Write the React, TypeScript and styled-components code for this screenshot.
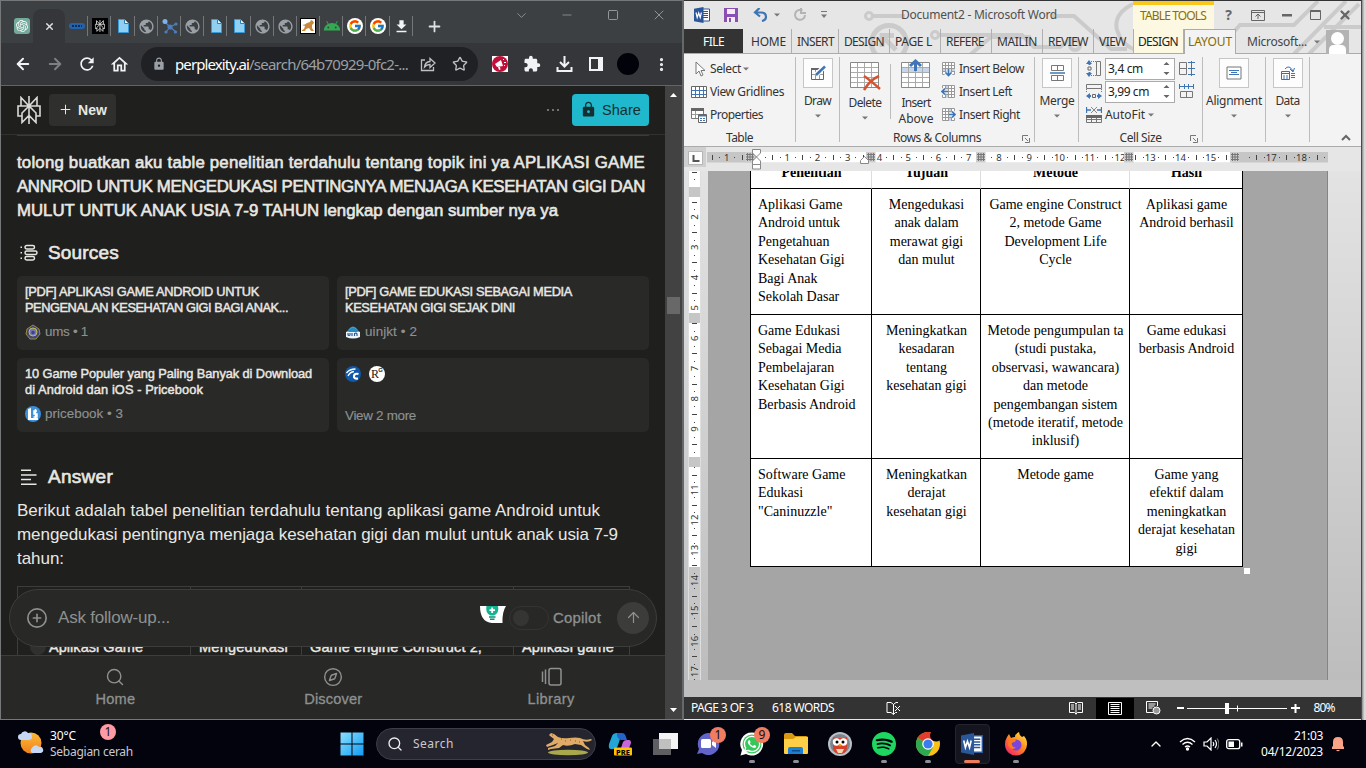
import React, { useLayoutEffect, useRef, useState } from "react";
import styled, { createGlobalStyle, css } from "styled-components";
import {
  ArrowLeft, ArrowRight, ArrowUp, ChevronDown, ChevronUp, CirclePlus, Compass, Minus, MoreVertical,
  Plus, Search, Square, Star, X,
} from "lucide-react";
import { FcGoogle } from "react-icons/fc";
import { SiOpenai, SiSpotify } from "react-icons/si";
import { MdAndroid, MdDownload, MdExtension, MdLock, MdPublic, MdRefresh, MdOutlineHome } from "react-icons/md";
import { FaWhatsapp } from "react-icons/fa";

const ui = `"Noto Sans", "Open Sans", sans-serif`;
const grotesk = `"Liberation Sans", Inter, sans-serif`;

const Global = createGlobalStyle`
  * { box-sizing: border-box; }
  body { margin: 0; overflow: hidden; background: #03030d; }
  svg { display: block; flex: none; }
`;

/* Text whose tracking is adjusted so that it spans a given width */
const FitSpan = styled.span`
  display: inline-block;
  white-space: pre;
  flex: none;
`;
function Fit({ w, children }: { w: number; children: string }) {
  const ref = useRef<HTMLSpanElement>(null);
  const [gap, setGap] = useState(0);
  useLayoutEffect(() => {
    const el = ref.current;
    if (el) setGap((w - el.getBoundingClientRect().width) / children.length);
  }, []);
  return <FitSpan ref={ref} style={{ letterSpacing: gap }}>{children}</FitSpan>;
}

const medium = css`
  font-weight: 400;
  -webkit-text-stroke: 0.6px currentColor;
`;

const Desktop = styled.div`
  width: 1366px;
  height: 768px;
  display: flex;
  flex-direction: column;
  overflow: hidden;
`;
const Windows = styled.div`
  height: 720px;
  display: flex;
`;

/* ---------- Browser ---------- */
const Browser = styled.section`
  width: 684px;
  height: 720px;
  border: 1px solid #757778;
  border-right: 2px solid #66696b;
  display: flex;
  flex-direction: column;
  background: #1f1f1e;
`;
const TabStrip = styled.div`
  height: 42px;
  background: #3c4043;
  display: flex;
  align-items: flex-end;
`;
const TabCell = styled.div`
  width: 23.2px;
  height: 34px;
  display: flex;
  align-items: center;
  justify-content: center;
  position: relative;
  &::after {
    content: "";
    position: absolute;
    right: 0;
    top: 7px;
    width: 1px;
    height: 20px;
    background: #73777a;
  }
`;
const FirstTab = styled.div`
  width: 32px;
  height: 34px;
  display: flex;
  align-items: center;
  justify-content: center;
  padding-left: 10px;
`;
const GptIcon = styled.div`
  width: 16px;
  height: 16px;
  border-radius: 3px;
  background: #74aa9c;
  color: #fff;
  display: grid;
  place-items: center;
`;
const ActiveTab = styled.div`
  width: 32px;
  height: 34px;
  border-radius: 8px 8px 0 0;
  background: #35363a;
  color: #dfe1e5;
  display: grid;
  place-items: center;
`;
const NewTab = styled.div`
  width: 44px;
  height: 34px;
  color: #dfe1e5;
  display: grid;
  place-items: center;
`;
const Caption = styled.div`
  display: flex;
  margin-left: auto;
  align-self: flex-start;
  color: #9da0a3;
  & > span { width: 46px; height: 28px; display: grid; place-items: center; }
`;
const Toolbar = styled.div`
  height: 43px;
  background: #35363a;
  border-bottom: 1px solid #626466;
  display: flex;
  align-items: center;
  padding-left: 6px;
`;
const ToolButton = styled.div<{ $w?: number; $dim?: boolean }>`
  width: ${(p) => p.$w ?? 32}px;
  height: 32px;
  flex: none;
  color: ${(p) => (p.$dim ? "#7d7f82" : "#f1f3f4")};
  display: grid;
  place-items: center;
`;
const Omnibox = styled.div`
  width: 337px;
  height: 34px;
  margin: 0 6px;
  border-radius: 17px;
  background: #202124;
  color: #9aa0a6;
  display: flex;
  align-items: center;
  padding: 0 2px 0 11px;
  font: 15px/20px ${ui};
  b { font-weight: 400; color: #fff; }
`;
const UrlText = styled.span`
  display: flex;
  flex: none;
  margin: 0 0 1px 9px;
  width: 237px;
`;
const Avatar = styled.div`
  width: 22px;
  height: 22px;
  border-radius: 50%;
  background: #02020a;
`;
const Viewport = styled.div`
  flex: 1;
  min-height: 0;
  display: flex;
`;
const Page = styled.main`
  width: 664px;
  height: 100%;
  position: relative;
  overflow: hidden;
  color: #e8e8e3;
  font-family: ${grotesk};
`;
const Scrollbar = styled.div`
  width: 17px;
  background: #424242;
  display: flex;
  flex-direction: column;
  align-items: center;
  padding: 7px 0;
`;
const Thumb = styled.div`
  width: 13px;
  height: 17px;
  margin: 200px 0 auto;
  background: #686868;
`;
const PageHeader = styled.header`
  height: 49px;
  border-bottom: 1px solid #31312f;
  display: flex;
  align-items: center;
  padding: 0 16px 1px;
`;
const NewButton = styled.div`
  width: 67px;
  height: 32px;
  margin-left: 8px;
  border-radius: 4px;
  background: #2f2f2d;
  display: flex;
  align-items: center;
  justify-content: center;
  gap: 5px;
  font-size: 14px;
  font-weight: 700;
`;
const Dots = styled.div`
  display: flex;
  gap: 3px;
  margin: 0 13px 0 auto;
  i { width: 2px; height: 2px; background: #8d918f; border-radius: 1px; }
`;
const ShareButton = styled.div`
  width: 77px;
  height: 32px;
  border-radius: 4px;
  background: #20b8cd;
  color: #15302f;
  display: flex;
  align-items: center;
  justify-content: center;
  gap: 5px;
  font-size: 14.5px;
`;
const Content = styled.div`
  padding: 0 16px;
`;
const Rule = styled.div`
  height: 1px;
  background: #3b3b39;
  width: 632px;
`;
const Query = styled.h1`
  margin: 15px 0 0;
  font-size: 16.8px;
  ${medium}
  line-height: 24px;
  display: flex;
  flex-direction: column;
  align-items: flex-start;
`;
const Heading = styled.h2<{ $top: number }>`
  margin: ${(p) => p.$top}px 0 0;
  height: 28px;
  display: flex;
  align-items: center;
  gap: 10px;
  padding-left: 3px;
  font-size: 19px;
  ${medium}
`;
const Cards = styled.div`
  margin-top: 9px;
  display: grid;
  grid-template-columns: 312px 312px;
  grid-auto-rows: 74px;
  gap: 8px;
`;
const Card = styled.article`
  border-radius: 5px;
  background: #292928;
  padding: 8px;
  display: flex;
  flex-direction: column;
  align-items: flex-start;
  font-size: 12.8px;
  ${medium}
  -webkit-text-stroke-width: 0.45px;
  line-height: 16px;
`;
const CardMeta = styled.div<{ $drop?: boolean }>`
  margin-top: auto;
  margin-bottom: ${(p) => (p.$drop ? -2 : 0)}px;
  height: 20px;
  display: flex;
  align-items: center;
  gap: 4px;
  color: #8d918f;
  font-size: 13.4px;
  -webkit-text-stroke: 0.15px currentColor;
`;
const Logos = styled.div`
  display: flex;
  gap: 8px;
  -webkit-text-stroke: 0;
`;
const Answer = styled.p`
  margin: 8px 0 0;
  font-size: 17px;
  line-height: 24px;
  display: flex;
  flex-direction: column;
  align-items: flex-start;
`;
const ResultTable = styled.div`
  margin-top: 15px;
  width: 613px;
  height: 120px;
  border: 1px solid #3d3d3b;
  background: #20201f;
  display: grid;
  grid-template-columns: 173px 111px 212px 1fr;
`;
const ResultCell = styled.div<{ $first?: boolean }>`
  padding: ${(p) => (p.$first ? "50px 0 0 12px" : "50px 0 0 8px")};
  border-right: 1px solid #3d3d3b;
  font-size: 14.5px;
  ${medium}
  -webkit-text-stroke-width: 0.4px;
  line-height: 20px;
  display: flex;
  gap: 3px;
  &:last-child { border-right: 0; }
`;
const Bullet = styled.span`
  width: 16px;
  height: 16px;
  margin-top: 2px;
  border-radius: 50%;
  background: #30302f;
`;
const FollowUp = styled.div`
  position: absolute;
  left: 8px;
  top: 503px;
  width: 648px;
  height: 58px;
  border: 1px solid #3d3d3b;
  border-radius: 29px;
  background: #282827;
  display: flex;
  align-items: center;
  padding: 0 7px 1px 16px;
  color: #8d918f;
  font-size: 17px;
`;
const Placeholder = styled.span`
  margin-left: 10px;
  flex: 1;
`;
const Toggle = styled.div`
  width: 40px;
  height: 24px;
  margin: 0 4px 0 3px;
  border: 1px solid #343433;
  border-radius: 12px;
  padding: 3px;
  &::before { content: ""; display: block; width: 16px; height: 16px; border-radius: 50%; background: #353534; }
`;
const CopilotLabel = styled.span`
  font-size: 15px;
  -webkit-text-stroke: 0.3px currentColor;
`;
const Send = styled.div`
  width: 32px;
  height: 32px;
  margin-left: 16px;
  border-radius: 50%;
  background: #3c3c3a;
  display: grid;
  place-items: center;
`;
const BottomNav = styled.nav`
  position: absolute;
  left: 0;
  right: 0;
  bottom: 0;
  height: 64px;
  border-top: 1px solid #3d3d3b;
  background: #282827;
  display: flex;
  padding: 11px 5px 0 5.5px;
  color: #8d918f;
  font-size: 14.6px;
  -webkit-text-stroke: 0.3px currentColor;
`;
const NavItem = styled.div`
  flex: 1;
  display: flex;
  flex-direction: column;
  align-items: center;
  gap: 4px;
  line-height: 17px;
`;

/* ---------- Word ---------- */
const Word = styled.section`
  width: 678px;
  height: 720px;
  border-top: 1px solid #333;
  border-right: 1px solid #4a4a4a;
  display: flex;
  flex-direction: column;
  background: #e6e6e6;
  font: 12px/16px ${ui};
  color: #333;
`;
const Top = styled.div`
  height: 53px;
  position: relative;
  border-bottom: 1px solid #ababab;
`;
const Circuit = styled.svg`
  position: absolute;
  inset: 0;
`;
const TitleRow = styled.div`
  height: 28px;
  position: relative;
  display: flex;
  color: #505050;
`;
const QuickAccess = styled.div`
  width: 217px;
  display: flex;
  align-items: center;
  padding-left: 10px;
`;
const DocTitle = styled.div`
  width: 232px;
  padding-top: 6px;
`;
const TableTools = styled.div`
  width: 81px;
  border-top: 4px solid #f8c81c;
  background: #fdf8e1;
  color: #8d6e00;
  padding: 3px 0 0 7px;
`;
const WinButtons = styled.div`
  display: flex;
  color: #666;
  & > span { width: 29px; height: 28px; display: grid; place-items: center; }
  b { font-size: 14px; }
`;
const TabRow = styled.div`
  height: 25px;
  position: relative;
  display: flex;
  line-height: 25px;
`;
const FileTab = styled.div`
  width: 59px;
  height: 24px;
  background: #333;
  color: #fff;
  text-align: center;
`;
const RibbonTab = styled.div<{ $w: number; $kind?: "tool" | "active"; $pad?: number }>`
  width: ${(p) => p.$w}px;
  height: 24px;
  padding-left: ${(p) => p.$pad ?? 5}px;
  border-right: 1px solid #b0b0b0;
  ${(p) => p.$kind === "tool" && css`background: #fdf8e1; color: #222;`}
  ${(p) => p.$kind === "active" && css`
    height: 25px;
    background: #f3f3f3;
    border: 1px solid #ababab;
    border-bottom: 0;
    line-height: 23px;
    color: #856a00;
  `}
`;
const Account = styled.div`
  display: flex;
  align-items: center;
  margin-left: 11px;
  color: #444;
`;
const Portrait = styled.div`
  width: 23px;
  height: 24px;
  margin-left: 6px;
  background: #b3b3b3;
`;
const Ribbon = styled.div`
  height: 93px;
  background: #f3f3f3;
  border-bottom: 1px solid #ababab;
  display: flex;
  padding-top: 3px;
`;
const Group = styled.div<{ $w: number }>`
  width: ${(p) => p.$w}px;
  height: 85px;
  border-right: 1px solid #bcbcbc;
  display: flex;
  flex-direction: column;
`;
const GroupBody = styled.div`
  height: 73px;
  flex: none;
  display: flex;
`;
const GroupLabel = styled.div`
  height: 16px;
  display: flex;
  align-items: center;
  justify-content: center;
  position: relative;
  & > svg { position: absolute; right: 4px; top: 5px; }
`;
const Commands = styled.div<{ $pad?: number }>`
  display: flex;
  flex-direction: column;
  padding-left: ${(p) => p.$pad ?? 0}px;
`;
const Command = styled.div<{ $gap?: number }>`
  height: 23px;
  flex: none;
  display: flex;
  align-items: center;
  gap: ${(p) => p.$gap ?? 3}px;
`;
const BigButton = styled.div<{ $w: number; $top?: number }>`
  width: ${(p) => p.$w}px;
  flex: none;
  padding-top: ${(p) => p.$top ?? 0}px;
  display: flex;
  flex-direction: column;
  align-items: center;
`;
const Tile = styled.div`
  width: 30px;
  height: 30px;
  margin: 1px 0 5px;
  border: 1px solid #c6c6c6;
  background: #fdfdfd;
  display: grid;
  place-items: center;
`;
const InnerRule = styled.div`
  width: 1px;
  height: 55px;
  margin-top: 7px;
  background: #bcbcbc;
`;
const SizeInput = styled.div`
  width: 70px;
  height: 22px;
  border: 1px solid #ababab;
  background: #fff;
  color: #222;
  display: flex;
  align-items: center;
  justify-content: space-between;
  padding: 0 4px 0 2px;
`;
const RulerRow = styled.div`
  height: 24px;
  display: flex;
`;
const Workspace = styled.div`
  height: 509px;
  display: flex;
  background: linear-gradient(#e3e3e3, #bdbdbd);
`;
const PageArea = styled.div`
  width: 620px;
  height: 509px;
  margin-left: 7px;
  border-right: 1px solid #858585;
  background: #a5a5a5;
  padding-left: 42px;
  overflow: hidden;
`;
const DocTable = styled.div`
  width: 493px;
  display: grid;
  grid-template-columns: 121px 109px 149px 112px;
  grid-template-rows: 18px 126px 144px 107px;
  background: #fff;
  border: 1px solid #000;
  border-top: 0;
  font: 14px/18.4px "Liberation Serif", serif;
  color: #000;
`;
const DocCell = styled.div<{ $left?: boolean; $head?: boolean }>`
  border-right: 1px solid #000;
  border-bottom: 1px solid #000;
  padding: 7px 0 0 ${(p) => (p.$left ? 7 : 1)}px;
  text-align: ${(p) => (p.$left ? "left" : "center")};
  white-space: pre;
  &:nth-child(4n) { border-right: 0; }
  &:nth-child(n + 13) { border-bottom: 0; }
  ${(p) => p.$head && css`
    border-right-color: #ddd;
    font-weight: 700;
    padding-top: 0;
    & > span { display: block; margin-top: -7px; }
  `}
`;
const EndMark = styled.div`
  width: 6px;
  height: 6px;
  margin: 1px 0 0 494px;
  background: #fff;
`;
const WordGap = styled.div`
  height: 17px;
  background: #bfbfbf;
`;
const StatusBar = styled.footer`
  height: 22px;
  background: #333;
  color: #fff;
  display: flex;
  align-items: center;
  padding-left: 7px;
`;
const ViewButton = styled.span<{ $on?: boolean }>`
  width: 38.5px;
  height: 21px;
  background: ${(p) => (p.$on ? "#000" : "transparent")};
  display: grid;
  place-items: center;
`;
const Behind = styled.div`
  width: 4px;
  height: 720px;
  background: linear-gradient(90deg, #8a8a8a, #d8d8d8 60%);
`;

/* ---------- Taskbar ---------- */
const Taskbar = styled.div`
  height: 48px;
  background: #03030d;
  color: #fff;
  display: flex;
  align-items: center;
  font: 12px/16px ${ui};
`;
const Weather = styled.div`
  width: 334px;
  height: 48px;
  padding-left: 17px;
  display: flex;
  align-items: center;
  gap: 5px;
`;
const Stack = styled.div<{ $end?: boolean }>`
  display: flex;
  flex-direction: column;
  align-items: ${(p) => (p.$end ? "flex-end" : "flex-start")};
`;
const Place = styled.span`
  color: #c9c9ce;
`;
const Pill = styled.div`
  width: 220px;
  height: 32px;
  margin-left: 7px;
  border: 1px solid #3e3e48;
  border-radius: 16px;
  background: #25252f;
  color: #c9c9ce;
  display: flex;
  align-items: center;
  padding: 0 3px 0 10px;
  gap: 10px;
  & > svg:last-child { margin-left: auto; }
`;
const AppSlot = styled.div<{ $w?: number; $state?: "run" | "focus" }>`
  width: ${(p) => p.$w ?? 44}px;
  height: 48px;
  display: grid;
  place-items: center;
  position: relative;
  ${(p) => p.$state && css`
    &::after {
      content: "";
      position: absolute;
      bottom: 5px;
      left: calc(50% - ${p.$state === "focus" ? 8 : 3}px);
      width: ${p.$state === "focus" ? 16 : 6}px;
      height: 3px;
      border-radius: 2px;
      background: ${p.$state === "focus" ? "#ee7c5e" : "#8e8e96"};
    }
  `}
`;
const FocusBox = styled.div`
  width: 35px;
  height: 40px;
  border: 1px solid #24242c;
  border-radius: 4px;
  background: #15151f;
  display: grid;
  place-items: center;
`;
const Badge = styled.span<{ $x: number; $y: number; $pink?: boolean }>`
  position: absolute;
  left: ${(p) => p.$x}px;
  top: ${(p) => p.$y}px;
  width: 16px;
  height: 16px;
  border-radius: 50%;
  background: ${(p) => (p.$pink ? "#ff99a4" : "#f27c62")};
  color: #111;
  text-align: center;
`;
const Tray = styled.div`
  display: flex;
  align-items: center;
  margin-left: 110px;
  & > svg + svg { margin-left: 7px; }
`;

/* ---------- Icons ---------- */
const Caret = ({ c = "#777" }: { c?: string }) => (
  <svg width="6" height="4"><path d="M0 .5h6L3 3.5z" fill={c} /></svg>
);
const DocIcon = () => (
  <svg width="14" height="16"><path d="M2.500 1.500h6l4 4v9h-10z" fill="#8fd0f3" stroke="#3a9ad9" /><path d="M8.500 1.500v4h4" fill="#e9f7ff" stroke="#2f7fb8" /></svg>
);
const PplxMark = ({ s, c, w = 1.5 }: { s: number; c: string; w?: number }) => (
  <svg width={(s * 24) / 28} height={s} viewBox="0 0 24 28" fill="none" stroke={c} strokeWidth={w}>
    <path d="M12 0v28M4 1.500l8 8.500 8-8.500V10H4zM4.500 10H1v10h4M19.500 10H23v10h-4M12 10l-7 7v9.500l7-7 7 7V17z" />
  </svg>
);
const Molecule = () => (
  <svg width="17" height="17" stroke="#4c7fc0" fill="#4c7fc0" strokeWidth="1.2"><path d="M4 4l5 5 6-3M9 9l-4 5M9 9l6 5" fill="none" /><circle cx="4" cy="3.5" r="2.500" fill="#7fb0e8" stroke="none" /><circle cx="9" cy="9" r="2" /><circle cx="15" cy="6" r="1" /><circle cx="5" cy="14" r="1" /><circle cx="14.500" cy="14" r="1" /></svg>
);
const Feline = () => (
  <svg width="46" height="24" viewBox="0 0 46 24">
    <ellipse cx="22" cy="20.500" rx="20" ry="2.800" fill="#a9a84a" />
    <path d="M3 3l2-2 3 1 4 3q5 2 11 1 7-1 11 0 5 3 11 1l1 1q-4 3-9 1l2 4 4 3 1 2-3-1-6-4-6-1q-7 3-12 1l-4 3-8 1-3 1v-2l7-2 3-3-5 2-6 2-1-2 6-3 2-3-4-3z" fill="#e0ab66" />
    <path d="M6 3h1M15 7h1M19 9h1M24 8h1M29 9h1M33 10h1" stroke="#8b5a2b" />
  </svg>
);
const TabCat = () => (
  <svg width="16" height="16"><rect x=".5" y=".5" width="15" height="15" fill="#fff" stroke="#000" /><path d="M2 7q3 0 5-2l3-1 1-2 2 1 1 2-2 2v3l2 3h-3l-2-3-3 1-1 2H2v-1l2-1 1-3z" fill="#c88a3a" /></svg>
);
const ShareOut = () => (
  <svg width="16" height="16" fill="none" stroke="#bdc1c6" strokeWidth="1.300"><path d="M5 4H1.500v10.500h12V11" /><path d="M4.500 11Q5 6 10 5.500V2.500l5 4.500-5 4.500v-3Q6.500 8.500 4.500 11z" /></svg>
);
const Megaphone = () => (
  <svg width="16" height="16"><path fill="#fff" d="M0 0h16v16H0z" /><circle cx="8" cy="8" r="8" fill="#c0103a" /><path d="M3 8l6-4 2 6-6 1zM6 11l1 3 1.500-.5L8 11z" fill="#fff" /><path d="M11 4l1-1M12 6.500h2M12 9l1 1" stroke="#fff" /></svg>
);
const TrayDownload = () => (
  <svg width="17" height="16" fill="none" stroke="#f1f3f4" strokeWidth="2"><path d="M8.500 0v10M4 6l4.500 4.500L13 6M1.500 11v4h14v-4" /></svg>
);
const SidePanel = () => (
  <svg width="14" height="14"><path d="M1 1h12v12H1z" fill="none" stroke="#f1f3f4" strokeWidth="2" /><path d="M9 1h4v12H9z" fill="#f1f3f4" /></svg>
);
const GoogleTab = () => (
  <svg width="16" height="16"><circle cx="8" cy="8" r="8" fill="#fff" /><FcGoogle x={1} y={1} size={14} /></svg>
);
const SourcesIcon = () => (
  <svg width="18" height="18" fill="none" stroke="#e8e8e3" strokeWidth="1.500"><rect x="5" y="1.500" width="9.500" height="3.500" rx="1.700" /><rect x="5" y="7" width="12" height="3.500" rx="1.700" /><rect x="5" y="12.500" width="9.500" height="3.500" rx="1.700" /><path d="M.5 3.200H2M.5 8.700H2M.5 14.200H2" /></svg>
);
const AnswerIcon = () => (
  <svg width="18" height="18" stroke="#e8e8e3" strokeWidth="1.500"><path d="M1 2.200h10M1 7h15.500M1 11.500h10M1 16.200h15.500" /></svg>
);
const Ums = () => (
  <svg width="16" height="16"><path d="M8 1l6 4 1 5-4 5H5l-4-5 1-5z" fill="#40477f" stroke="#9a8c3c" /><circle cx="8" cy="8" r="4" fill="#6f78b6" stroke="#c8b94e" /><circle cx="8" cy="8.500" r="1.700" fill="#3b4484" /></svg>
);
const Uin = () => (
  <svg width="16" height="16"><path d="M3 6q5-7 10 0" fill="#3aa7d5" /><path d="M1 8l7-3 7 3v5q-7 3-14 0z" fill="#eef6fb" /><path d="M3 9v2q1.500 1 2 0V9M7 9v3M9.500 12V9.500q2-1 2.500.5v2" stroke="#245c9a" fill="none" strokeWidth="1.200" /><path d="M2 7l6-3.500L14 7l-2 1H4z" fill="#2b8ac0" /></svg>
);
const Pricebook = () => (
  <svg width="16" height="16"><circle cx="8" cy="8" r="8" fill="#3c8fd9" /><path d="M3 3l3-1v10h7v2H3z" fill="#fff" /><path d="M12 5H9v3h3v3H8.500M10.500 3v9" stroke="#fff" fill="none" strokeWidth="1.500" /></svg>
);
const CrossrefC = () => (
  <svg width="16" height="16" fill="none" stroke="#fff"><circle cx="8" cy="8" r="8" fill="#1258a8" stroke="none" /><path d="M13.500 8q-4-1-4.500 2t4 2.500" strokeWidth="2.200" /><path d="M1.500 7q3-4 9-4M3 10q2-4 6-4.500" strokeWidth="1.300" /></svg>
);
const RgCircle = styled.span`
  width: 16px;
  height: 16px;
  border-radius: 50%;
  background: #fff;
  color: #222;
  font: 12px/17px "Liberation Serif", serif;
  padding-left: 2px;
  position: relative;
  sup { position: absolute; right: 2px; top: 1px; font: 700 6px/6px "Liberation Sans", sans-serif; }
`;
const Bulb = () => (
  <svg width="26" height="24"><path d="M0 0h26q-4 6-3.500 17H12Q0 16 0 0z" fill="#fff" /><path d="M6.500 0h11.500q1.500 7-4 9.500h-3.500Q5 7 6.500 0z" fill="#12b392" /><path d="M9 11h6.500M10 13.200h4.500" stroke="#0b8d76" strokeWidth="1.400" /><path d="M12.200 1.500v5.500M9.500 4.200h5.500" stroke="#fff" strokeWidth="1.800" /></svg>
);
const LibraryIcon = () => (
  <svg width="21" height="20" fill="none" stroke="#8d918f" strokeWidth="1.500"><rect x="8" y="1.500" width="12" height="16.500" rx="2" /><path d="M4.500 2.500v14.500M1.500 4.500v10.500" /></svg>
);

const WordIcon = ({ s = 16 }: { s?: number }) => (
  <svg width={s} height={s} viewBox="0 0 16 16">
    <path d="M8 2h7.500v12H8z" fill="#fff" stroke="#2b579a" />
    <path d="M9 4.500h5M9 6.500h5M9 8.500h5M9 10.500h5" stroke="#2b579a" />
    <path d="M0 1.800L9.500 0v16L0 14.200z" fill="#2b579a" />
    <path d="M2 5.500l1.200 5L4.700 6l1.500 4.500 1.200-5" fill="none" stroke="#fff" strokeWidth="1.200" />
  </svg>
);
const Save = () => (
  <svg width="14" height="14"><path d="M0 0h14v14H0z" fill="#8a4fb3" /><path d="M3 1h8v5H3zM3 9h8v5H3z" fill="#f3ecf8" /><path d="M5 10h2v4H5z" fill="#8a4fb3" /></svg>
);
const Undo = () => (
  <svg width="15" height="14" fill="none" stroke="#3f75b5" strokeWidth="2.200"><path d="M6.500 0L2 4.500 7 8.500M2 4.500h6q5 0 5 4.500 0 3-4 4" /></svg>
);
const Redo = () => (
  <svg width="14" height="14" fill="none" stroke="#b4b4b4" strokeWidth="2"><path d="M9.500 2.500A5 5 0 1 0 12 7M8 0v5h5" /></svg>
);
const Pointer = () => (
  <svg width="17" height="16"><path d="M5 1v12l3-3 2 5 2-1-2-4.500h4z" fill="#fff" stroke="#777" /></svg>
);
const GridIcon = ({ mark }: { mark: "view" | "props" }) => (
  <svg width="16" height="16" fill="none">
    {mark === "view" ? (
      <><path d="M.5 2.500h15v11H.5z" fill="#fff" stroke="#666" /><path d="M4.500 3v10M8.500 3v10M12.500 3v10M1 6.500h14M1 10.500h14" stroke="#3f75b5" /></>
    ) : (
      <><path d="M.5 1.500h12v10H.5z" fill="#fff" stroke="#777" /><path d="M0 1h13v3H0z" fill="#666" /><path d="M4.500 4v7M1 7.500h11" stroke="#999" /><path d="M7.500 7.500h8v8h-8z" fill="#fff" stroke="#666" /><path d="M8 8h7v1.500H8z" fill="#3f75b5" /><path d="M9 11.500h2M12 11.500h2M9 13.500h2M12 13.500h2" stroke="#3f75b5" /></>
    )}
  </svg>
);
const RowGrid = ({ kind }: { kind: "delete" | "above" }) => (
  <svg width="32" height="32" fill="none">
    <path d="M1.500 3.500h28v25h-28z" fill="#fff" stroke="#888" />
    {kind === "above" && <path d="M2 9h27v5H2z" fill="#c3d6ec" />}
    <path d="M8.500 4v24M15.500 4v24M22.500 4v24M2 8.500h27M2 13.500h27M2 18.500h27M2 23.500h27" stroke="#aaa" />
    {kind === "delete" ? <path d="M15 17q6 4 16 13M30 17q-9 4-15 14" stroke="#d35230" strokeWidth="2.500" /> : <path d="M15.500 12V3M10 7l5.500-5L21 7" stroke="#3f75b5" strokeWidth="3" />}
  </svg>
);
const InsertIcon = ({ d, fill }: { d: string; fill: string }) => (
  <svg width="15" height="16" fill="none"><path d="M1.500 1.500h12v12h-12z" fill="#fff" stroke="#999" /><path d={fill} fill="#c3d6ec" /><path d="M4.500 2v12M7.500 2v12M10.500 2v12M2 4.500h12M2 7.500h12M2 10.500h12" stroke="#999" /><path d={d} stroke="#f3f3f3" strokeWidth="4" /><path d={d} stroke="#3f75b5" strokeWidth="1.700" /></svg>
);
const Launcher = () => (
  <svg width="8" height="8" fill="none" stroke="#777"><path d="M.5 6V.5H6M3 3l3 3M7.500 3v4.500H3" /></svg>
);
const DrawIcon = () => (
  <svg width="16" height="16" fill="none"><path d="M1.500 3.500h12v11h-12z" stroke="#666" /><path d="M1 3h12v2H1z" fill="#666" /><path d="M5.500 5v9M9.500 5v9M2 9.500h11" stroke="#999" /><path d="M6 10l8-8" stroke="#fff" strokeWidth="5" /><path d="M6 10l9-8.500" stroke="#3f75b5" strokeWidth="2.500" /></svg>
);
const MergeIcon = () => (
  <svg width="15" height="18" fill="none" stroke="#777"><path d="M1.500 1.500h12v5h-12zM1.500 11.500h12v5h-12zM7.500 1.500v5M7.500 11.500v5" /><path d="M0 9h15" stroke="#3f75b5" strokeWidth="1.500" /></svg>
);
const AlignIcon = () => (
  <svg width="16" height="14" fill="none"><path d="M1 1h14v12H1z" stroke="#777" /><path d="M3 4.500h10M5 6.500h6M3 8.500h10" stroke="#3f75b5" /></svg>
);
const DataIcon = () => (
  <svg width="16" height="16" fill="none"><path d="M1.500 6.500h8v8h-8zM1.500 8.500h8" stroke="#666" /><path d="M3 11h2M6 11h2M3 13h2M6 13h2M11 8.500h4M11 10.500h4M11 12.500h4M5 4q4-5 8 2M10 4l3 3 1.500-4" stroke="#3f75b5" /></svg>
);
const HeightIcon = () => (
  <svg width="16" height="17" fill="none"><path d="M10.500 1.500h4v14h-4z" stroke="#777" /><path d="M5 1.500h5M5 15.500h5" stroke="#777" strokeDasharray="1 1" /><path d="M3 0L0 4h6zM3 17l-3-4h6z" fill="#3f75b5" /><path d="M3.500 3v2M3.500 12v2" stroke="#3f75b5" strokeWidth="2" /><path d="M2 7h3v3H2z" stroke="#666" /></svg>
);
const WidthIcon = () => (
  <svg width="16" height="17" fill="none"><path d="M.5 1.500h15v4H.5z" stroke="#777" /><path d="M.5 6v4M15.500 6v4" stroke="#777" strokeDasharray="1 1" /><path d="M0 13l4-3v6zM16 13l-4-3v6z" fill="#3f75b5" /><path d="M3 13h2M11 13h2" stroke="#3f75b5" strokeWidth="2" /><path d="M6.500 11.500h3v3h-3z" stroke="#666" /></svg>
);
const AutoFitIcon = () => (
  <svg width="16" height="16" fill="none"><path d="M.5 0v6M15.500 0v6M1 3h4M11 3h4" stroke="#3f75b5" strokeWidth="1.300" /><path d="M5 0l6 6M11 0L5 6" stroke="#888" /><path d="M.5 8.500h15v7H.5zM1 12.500h14M5.500 11v5M10.500 11v5" stroke="#777" /><path d="M0 8h16v3H0z" fill="#666" /></svg>
);
const Distribute = ({ cols }: { cols?: boolean }) => (
  <svg width="17" height="17" fill="none" viewBox="0 0 17 17">
    {cols ? <><path d="M2.500 8.500h12v6h-12zM8.500 8.500v6" stroke="#777" /><path d="M1 3.500h15M1.500 1v5M6.500 1v5M10.500 1v5M15.500 1v5" stroke="#3f75b5" /></> : <><path d="M1.500 2.500h7v12h-7zM1.500 8.500h7" stroke="#777" /><path d="M13.500 1v15M10 2.500h7M10 8.500h7M10 14.500h7" stroke="#3f75b5" /></>}
  </svg>
);
const Spin = () => (
  <svg width="7" height="15"><path d="M.5 4h6l-3-3zM.5 11h6l-3 3z" fill="#666" /></svg>
);

/* ---------- Rulers ---------- */
const CM = 30.25;
const Hatch = ({ x, y }: { x: number; y: number }) => (
  <g transform={`translate(${x} ${y})`}><path d="M-1-1h9.500v10.500H-1z" fill="#cdcdcd" /><path d="M1.500 0v8M4 0v8M6.500 0v8M0 1.500h8M0 4h8M0 6.500h8" stroke="#777" /></g>
);
function HorizontalRuler() {
  const zero = 50;
  const marks = [-1, 1, 2, 3, 4, 5, 6, 7, 8, 9, 10, 11, 12, 13, 14, 15, 17, 18];
  const ticks = [];
  for (let q = -6; q < 76; q++) {
    if (q % 4 === 0) continue;
    const x = Math.round(zero + (q * CM) / 4);
    ticks.push(q % 2 ? <rect key={q} x={x} y={10} width={1} height={1} fill="#444" /> : <rect key={q} x={x} y={8} width={1} height={5} fill="#444" />);
  }
  return (
    <svg width="630" height="24" fontFamily='"Noto Sans"' fontSize="9.500" fill="#333" textAnchor="middle">
      <path d="M0 5h621v10.500H0z" fill="#c6c6c6" />
      <path d="M50 5h475v10.500H50z" fill="#fff" />
      {ticks}
      {marks.map((m) => <text key={m} x={zero + (m < 0 ? -1 : m) * CM + (m === 4 ? 1.5 : 0)} y={14}>{Math.abs(m)}</text>)}
      {[39, 160, 270, 418, 524].map((x) => <Hatch key={x} x={x} y={6} />)}
      <path d="M45.500 2.500h8v3.500l-4 4-4-4zM45.500 17.500v-3.500l4-4 4 4v3.500zM45.500 17.500h8v4.500h-8z" fill="#fff" stroke="#888" />
      <path d="M153.500 16.500v-3l4-4 4 4v3z" fill="#fff" stroke="#888" />
    </svg>
  );
}
function VerticalRuler() {
  const at = (n: number) => 46 + (n - 2) * 30.3;
  const ticks = [];
  for (let q = 2; q < 72; q++) {
    if (q % 4 === 0) continue;
    const y = Math.round(at(q / 4));
    ticks.push(q % 2 ? <rect key={q} x={10} y={y} width={1} height={1} fill="#444" /> : <rect key={q} x={8} y={y} width={5} height={1} fill="#444" />);
  }
  return (
    <svg width="17" height="509" fontFamily='"Noto Sans"' fontSize="9.500" fill="#333" textAnchor="middle">
      <path d="M4.500-1h12v511h-12z" fill="#c6c6c6" stroke="#dedede" />
      <path d="M5 0h11v396H5z" fill="#fff" />
      {ticks}
      {[2, 3, 4, 5, 6, 7, 8, 9, 11, 12, 13, 14, 15, 16, 17].map((n) => (
        <text key={n} transform={`translate(14 ${at(n)}) rotate(-90)`}>{n}</text>
      ))}
      {[16, 142, 286].map((y) => <path key={y} d={`M5 ${y}h11v10H5z`} fill="#c6c6c6" />)}
    </svg>
  );
}

const circuit = (
  <Circuit width="677" height="52" fill="none" stroke="#cbcbcb" strokeWidth="4">
    <circle cx="185" cy="15" r="3.500" strokeWidth="3" /><path d="M189 15h32" />
    <circle cx="205" cy="42" r="17.500" strokeWidth="5" /><path d="M212 49l-14-14m0 11V34.500h12" strokeWidth="5" />
    <circle cx="251" cy="34" r="3.500" strokeWidth="3" /><path d="M255 34h83l12 12h26l12-9" />
    <path d="M287 53l20-17h40M368 15h22l37 33h16M449 3q-20 10-16 26 4 14 18 20" />
    <circle cx="391" cy="44" r="5" /><path d="M530 53l26-29h54l24-24M610 53l52-53M640 26h37M625 53l50-50" />
  </Circuit>
);

const docRows: string[][] = [
  ["Aplikasi Game\nAndroid untuk\nPengetahuan\nKesehatan Gigi\nBagi Anak\nSekolah Dasar", "Mengedukasi\nanak dalam\nmerawat gigi\ndan mulut", "Game engine Construct\n2, metode Game\nDevelopment Life\nCycle", "Aplikasi game\nAndroid berhasil"],
  ["Game Edukasi\nSebagai Media\nPembelajaran\nKesehatan Gigi\nBerbasis Android", "Meningkatkan\nkesadaran\ntentang\nkesehatan gigi", "Metode pengumpulan ta\n(studi pustaka,\nobservasi, wawancara)\ndan metode\npengembangan sistem\n(metode iteratif, metode\ninklusif)", "Game edukasi\nberbasis Android"],
  ["Software Game\nEdukasi\n\"Caninuzzle\"", "Meningkatkan\nderajat\nkesehatan gigi", "Metode game", "Game yang\nefektif dalam\nmeningkatkan\nderajat kesehatan\ngigi"],
];

function BrowserWindow() {
  return (
    <Browser>
      <TabStrip>
        <FirstTab><GptIcon><SiOpenai size={12} /></GptIcon></FirstTab>
        <ActiveTab><X size={11} strokeWidth={3} /></ActiveTab>
        <TabCell><svg width="16" height="6"><rect width="16" height="6" rx="3" fill="#2463ac" /><path d="M3 3h10" stroke="#0b2d5c" strokeWidth="2" strokeDasharray="2 1" /></svg></TabCell>
        <TabCell><svg width="16" height="16"><path d="M0 0h16v16H0z" /><g transform="translate(2.800 2)"><PplxMark s={12} c="#ddd" w={2} /></g></svg></TabCell>
        <TabCell><DocIcon /></TabCell>
        <TabCell><MdPublic size={17} color="#9aa0a6" /></TabCell>
        <TabCell><Molecule /></TabCell>
        <TabCell><MdPublic size={17} color="#9aa0a6" /></TabCell>
        <TabCell><DocIcon /></TabCell>
        <TabCell><DocIcon /></TabCell>
        <TabCell><MdPublic size={17} color="#9aa0a6" /></TabCell>
        <TabCell><MdPublic size={17} color="#9aa0a6" /></TabCell>
        <TabCell><TabCat /></TabCell>
        <TabCell><MdAndroid size={18} color="#34a853" /></TabCell>
        <TabCell><GoogleTab /></TabCell>
        <TabCell><GoogleTab /></TabCell>
        <TabCell><MdDownload size={17} color="#f1f3f4" /></TabCell>
        <NewTab><Plus size={17} strokeWidth={2.500} /></NewTab>
        <Caption>
          <span><ChevronDown size={15} strokeWidth={1.300} /></span>
          <span><Minus size={14} strokeWidth={1.300} /></span>
          <span><Square size={12} strokeWidth={1.800} /></span>
          <span><X size={16} strokeWidth={1.300} /></span>
        </Caption>
      </TabStrip>
      <Toolbar>
        <ToolButton><ArrowLeft size={18} strokeWidth={2.600} /></ToolButton>
        <ToolButton $dim><ArrowRight size={18} strokeWidth={2.600} /></ToolButton>
        <ToolButton><MdRefresh size={20} /></ToolButton>
        <ToolButton><MdOutlineHome size={21} /></ToolButton>
        <Omnibox>
          <MdLock size={14} />
          <UrlText><b><Fit w={74}>perplexity.ai</Fit></b><Fit w={159}>/search/64b70929-0fc2-...</Fit></UrlText>
          <ToolButton><ShareOut /></ToolButton>
          <ToolButton><Star size={16} color="#bdc1c6" /></ToolButton>
        </Omnibox>
        <ToolButton><Megaphone /></ToolButton>
        <ToolButton><MdExtension size={18} /></ToolButton>
        <ToolButton><TrayDownload /></ToolButton>
        <ToolButton><SidePanel /></ToolButton>
        <ToolButton><Avatar /></ToolButton>
        <ToolButton $w={34}><MoreVertical size={17} strokeWidth={2.500} /></ToolButton>
      </Toolbar>
      <Viewport>
        <Page>
          <PageHeader>
            <PplxMark s={28} c="#d9d9d5" w={1.600} />
            <NewButton><Plus size={15} strokeWidth={1.600} /><Fit w={29}>New</Fit></NewButton>
            <Dots><i /><i /><i /></Dots>
            <ShareButton><MdLock size={17} /><Fit w={39}>Share</Fit></ShareButton>
          </PageHeader>
          <Content>
            <Rule />
            <Query>
              <Fit w={628}>tolong buatkan aku table penelitian terdahulu tentang topik ini ya APLIKASI GAME</Fit>
              <Fit w={628}>ANNROID UNTUK MENGEDUKASI PENTINGNYA MENJAGA KESEHATAN GIGI DAN</Fit>
              <Fit w={541}>MULUT UNTUK ANAK USIA 7-9 TAHUN lengkap dengan sumber nya ya</Fit>
            </Query>
            <Heading $top={16}><SourcesIcon /><Fit w={71}>Sources</Fit></Heading>
            <Cards>
              <Card>
                <Fit w={234}>[PDF] APLIKASI GAME ANDROID UNTUK</Fit>
                <Fit w={263}>PENGENALAN KESEHATAN GIGI BAGI ANAK...</Fit>
                <CardMeta><Ums /><Fit w={43}>ums • 1</Fit></CardMeta>
              </Card>
              <Card>
                <Fit w={227}>[PDF] GAME EDUKASI SEBAGAI MEDIA</Fit>
                <Fit w={170}>KESEHATAN GIGI SEJAK DINI</Fit>
                <CardMeta><Uin /><Fit w={52}>uinjkt • 2</Fit></CardMeta>
              </Card>
              <Card>
                <Fit w={287}>10 Game Populer yang Paling Banyak di Download</Fit>
                <Fit w={178}>di Android dan iOS - Pricebook</Fit>
                <CardMeta><Pricebook /><Fit w={78}>pricebook • 3</Fit></CardMeta>
              </Card>
              <Card>
                <Logos><CrossrefC /><RgCircle>R<sup>G</sup></RgCircle></Logos>
                <CardMeta $drop><Fit w={71}>View 2 more</Fit></CardMeta>
              </Card>
            </Cards>
            <Heading $top={31}><AnswerIcon /><Fit w={65}>Answer</Fit></Heading>
            <Answer>
              <Fit w={583}>Berikut adalah tabel penelitian terdahulu tentang aplikasi game Android untuk</Fit>
              <Fit w={601}>mengedukasi pentingnya menjaga kesehatan gigi dan mulut untuk anak usia 7-9</Fit>
              <Fit w={47}>tahun:</Fit>
            </Answer>
            <ResultTable>
              <ResultCell $first><Bullet /><Fit w={94}>Aplikasi Game</Fit></ResultCell>
              <ResultCell><Fit w={89}>Mengedukasi</Fit></ResultCell>
              <ResultCell><Fit w={172}>Game engine Construct 2,</Fit></ResultCell>
              <ResultCell><Fit w={92}>Aplikasi game</Fit></ResultCell>
            </ResultTable>
          </Content>
          <FollowUp>
            <CirclePlus size={22} strokeWidth={1.800} />
            <Placeholder><Fit w={112}>Ask follow-up...</Fit></Placeholder>
            <Bulb />
            <Toggle />
            <CopilotLabel><Fit w={48}>Copilot</Fit></CopilotLabel>
            <Send><ArrowUp size={17} strokeWidth={1.700} /></Send>
          </FollowUp>
          <BottomNav>
            <NavItem><Search size={20} strokeWidth={1.700} /><Fit w={40}>Home</Fit></NavItem>
            <NavItem><Compass size={20} strokeWidth={1.700} /><Fit w={58}>Discover</Fit></NavItem>
            <NavItem><LibraryIcon /><Fit w={47}>Library</Fit></NavItem>
          </BottomNav>
        </Page>
        <Scrollbar>
          <svg width="7" height="4"><path d="M0 4h7L3.500 0z" fill="#fff" /></svg>
          <Thumb />
          <svg width="7" height="4"><path d="M0 0h7L3.500 4z" fill="#fff" /></svg>
        </Scrollbar>
      </Viewport>
    </Browser>
  );
}

const tabs: [string, number, number][] = [
  ["HOME", 35, 49], ["INSERT", 37, 47], ["DESIGN", 40, 51], ["PAGE L", 37, 51], ["REFERE", 38, 51],
  ["MAILIN", 40, 51], ["REVIEW", 40, 51], ["VIEW", 27, 40],
];

function WordWindow() {
  return (
    <Word>
      <Top>
        {circuit}
        <TitleRow>
          <QuickAccess>
            <WordIcon /><svg width="14" height="1" /><Save /><svg width="15" height="1" /><Undo />
            <svg width="6" height="1" /><Caret /><svg width="13" height="1" /><Redo /><svg width="14" height="1" />
            <svg width="6" height="8"><path d="M0 .5h6" stroke="#777" /><path d="M0 3.500h6L3 7z" fill="#777" /></svg>
          </QuickAccess>
          <DocTitle><Fit w={156}>Document2 - Microsoft Word</Fit></DocTitle>
          <TableTools><Fit w={66}>TABLE TOOLS</Fit></TableTools>
          <WinButtons>
            <span><b>?</b></span>
            <span><svg width="14" height="11" fill="none" stroke="#666"><path d="M.5.5h13v10H.5zM1 2.500h12M7 9V4.500M4.500 6.500L7 4l2.500 2.500" /></svg></span>
            <span><svg width="10" height="3"><path d="M0 0h10v2.500H0z" fill="#666" /></svg></span>
            <span><svg width="11" height="10" fill="none" stroke="#666"><path d="M.5.5h10v9H.5zM0 1.500h11" /></svg></span>
            <span><X size={14} strokeWidth={4} /></span>
          </WinButtons>
        </TitleRow>
        <TabRow>
          <FileTab><Fit w={21}>FILE</Fit></FileTab>
          {tabs.map(([label, w, cell], i) => (
            <RibbonTab key={i} $w={cell} $pad={i ? 5 : 8}><Fit w={w}>{label}</Fit></RibbonTab>
          ))}
          <RibbonTab $w={50} $kind="tool" $pad={4}><Fit w={40}>DESIGN</Fit></RibbonTab>
          <RibbonTab $w={52} $kind="active" $pad={3}><Fit w={44}>LAYOUT</Fit></RibbonTab>
          <Account>
            <Fit w={60}>Microsoft...</Fit>
            <svg width="7" height="1" /><Caret />
            <Portrait><svg width="23" height="24" fill="#fff"><circle cx="11.500" cy="8.500" r="6.500" /><path d="M3 24v-4q0-5 5-5h7q5 0 5 5v4z" /></svg></Portrait>
          </Account>
        </TabRow>
      </Top>
      <Ribbon>
        <Group $w={112}>
          <GroupBody>
            <Commands $pad={7}>
              <Command $gap={2}><Pointer /><Fit w={31}>Select</Fit><Caret /></Command>
              <Command><GridIcon mark="view" /><Fit w={74}>View Gridlines</Fit></Command>
              <Command><GridIcon mark="props" /><Fit w={53}>Properties</Fit></Command>
            </Commands>
          </GroupBody>
          <GroupLabel><Fit w={27}>Table</Fit></GroupLabel>
        </Group>
        <Group $w={44}>
          <BigButton $w={43}><Tile><DrawIcon /></Tile><Fit w={27}>Draw</Fit><svg width="1" height="5" /><Caret /></BigButton>
        </Group>
        <Group $w={195}>
          <GroupBody>
            <BigButton $w={50} $top={2}><RowGrid kind="delete" /><svg width="1" height="4" /><Fit w={33}>Delete</Fit><svg width="1" height="5" /><Caret /></BigButton>
            <InnerRule />
            <BigButton $w={50} $top={2}><RowGrid kind="above" /><svg width="1" height="4" /><Fit w={29}>Insert</Fit><Fit w={35}>Above</Fit></BigButton>
            <Commands>
              <Command><InsertIcon fill="M2 8h12v3H2z" d="M7.500 8v6M4.500 11.500l3 3 3-3" /><Fit w={65}>Insert Below</Fit></Command>
              <Command><InsertIcon fill="M5 2h3v12H5z" d="M7 7.500H1M4 4.500l-3 3 3 3" /><Fit w={53}>Insert Left</Fit></Command>
              <Command><InsertIcon fill="M8 2h3v12H8z" d="M8 7.500h6M11 4.500l3 3-3 3" /><Fit w={61}>Insert Right</Fit></Command>
            </Commands>
          </GroupBody>
          <GroupLabel><Fit w={88}>Rows &amp; Columns</Fit><Launcher /></GroupLabel>
        </Group>
        <Group $w={44}>
          <BigButton $w={44}><Tile><MergeIcon /></Tile><Fit w={35}>Merge</Fit><svg width="1" height="5" /><Caret /></BigButton>
        </Group>
        <Group $w={124}>
          <GroupBody>
            <Commands $pad={7}>
              <Command><HeightIcon /><SizeInput><Fit w={35}>3,4 cm</Fit><Spin /></SizeInput><Distribute /></Command>
              <Command><WidthIcon /><SizeInput><Fit w={41}>3,99 cm</Fit><Spin /></SizeInput><Distribute cols /></Command>
              <Command><AutoFitIcon /><Fit w={40}>AutoFit</Fit><Caret /></Command>
            </Commands>
          </GroupBody>
          <GroupLabel><Fit w={42}>Cell Size</Fit><Launcher /></GroupLabel>
        </Group>
        <Group $w={63}>
          <BigButton $w={62}><Tile><AlignIcon /></Tile><Fit w={56}>Alignment</Fit><svg width="1" height="5" /><Caret /></BigButton>
        </Group>
        <Group $w={44}>
          <BigButton $w={43}><Tile><DataIcon /></Tile><Fit w={24}>Data</Fit><svg width="1" height="5" /><Caret /></BigButton>
        </Group>
        <svg width="51" height="88" fill="none" stroke="#666" strokeWidth="2"><path d="M32 83l4-4 4 4" /></svg>
      </Ribbon>
      <RulerRow>
        <svg width="23" height="24"><path d="M0 0h22v20H0z" fill="#cfcfcf" /><path d="M4.500 4.500h14v13h-14z" fill="#fdfdfd" stroke="#b5b5b5" /><path d="M9.500 8v6h6" fill="none" stroke="#555" strokeWidth="2" /></svg>
        <HorizontalRuler />
      </RulerRow>
      <Workspace>
        <VerticalRuler />
        <PageArea>
          <DocTable>
            {["Penelitian", "Tujuan", "Metode", "Hasil"].map((h) => <DocCell key={h} $head><span>{h}</span></DocCell>)}
            {docRows.flatMap((r, i) => r.map((c, j) => <DocCell key={`${i}-${j}`} $left={j === 0}>{c}</DocCell>))}
          </DocTable>
          <EndMark />
        </PageArea>
      </Workspace>
      <WordGap />
      <StatusBar>
        <Fit w={62}>PAGE 3 OF 3</Fit><svg width="19" height="1" /><Fit w={62}>618 WORDS</Fit>
        <svg width="52" height="1" />
        <svg width="15" height="13" fill="none" stroke="#fff"><path d="M7.500 2v10.500M7 2L5 .5H1v10h4l2.500 2 2-2H11M8 2l2-1.500h2M9 4l5 5M14 4L9 9" /></svg>
        <svg width="156" height="1" />
        <ViewButton><svg width="14" height="13" fill="none" stroke="#fff"><path d="M7 2v10.500M7 2L5.500.5h-5v10h5L7 12l1.500-1.500h5V.5h-5zM2 3h3M2 5h3M2 7h3M9 3h3M9 5h3M9 7h3" /></svg></ViewButton>
        <ViewButton $on><svg width="14" height="13" fill="none" stroke="#fff"><path d="M.5.5h13v12H.5zM2.500 2.500h9M2.500 4.500h9M2.500 6.500h9M2.500 8.500h9M2.500 10.500h9" /></svg></ViewButton>
        <ViewButton><svg width="15" height="14" fill="none" stroke="#fff"><path d="M7 11.500H.5V.5h11V5M2.500 3h7M2.500 5h6M2.500 7h4" /><circle cx="10.500" cy="9.500" r="3.500" fill="#999" /></svg></ViewButton>
        <svg width="130" height="12" stroke="#fff"><path d="M4 6h7M118 6h9M122.500 2v9" strokeWidth="2" /><path d="M14 6.500h100M64.500 3.500v6" /><path d="M52 1h4v11h-4z" fill="#fff" stroke="none" /></svg>
        <svg width="11" height="1" /><Fit w={21}>80%</Fit>
      </StatusBar>
    </Word>
  );
}

function SystemTaskbar() {
  return (
    <Taskbar>
      <Weather>
        <svg width="28" height="26"><defs><linearGradient id="sun" x2="0" y2="1"><stop stopColor="#fbbd3a" /><stop offset="1" stopColor="#ef7f1a" /></linearGradient></defs><circle cx="14" cy="12" r="10.500" fill="url(#sun)" /><path d="M4 9a3 3 0 0 1 0-6 4 4 0 0 1 7-1 3.500 3.500 0 0 1 1 7zM15 22a3 3 0 0 1 0-5 4 4 0 0 1 7-1 3 3 0 0 1 2 6z" fill="#c6d8f5" /></svg>
        <Stack><Fit w={26}>30°C</Fit><Place><Fit w={83}>Sebagian cerah</Fit></Place></Stack>
      </Weather>
      <AppSlot $w={35}>
        <Badge $x={-234} $y={4} $pink>1</Badge>
        <svg width="24" height="24"><defs><linearGradient id="win" x2="1" y2="1"><stop stopColor="#8be0fd" /><stop offset="1" stopColor="#109cf5" /></linearGradient></defs><path d="M.5.5h11v11H.5zM12.500.5h11v11h-11zM.5 12.500h11v11H.5zM12.500 12.500h11v11h-11z" fill="url(#win)" /></svg>
      </AppSlot>
      <Pill><Search size={16} color="#eee" /><Fit w={41}>Search</Fit><Feline /></Pill>
      <AppSlot $w={48}>
        <svg width="24" height="24" fontFamily='"Noto Sans"'><path d="M3 17Q0 17 1 12L4 4q1-3 5-3h5l-4 12q-1 4-5 4z" fill="#22a6d8" /><path d="M9 1h5q3 0 4 4l1 3h-6q-3-1-4-4z" fill="#2464c8" /><path d="M12 19l3-9q1-2 4-2h2q2 0 2 3l-3 8z" fill="#c766d8" /><rect x="6" y="15.500" width="18" height="8" rx="1" fill="#ffc400" /><text x="15" y="22.500" fontSize="7.500" fontWeight="800" textAnchor="middle">PRE</text></svg>
      </AppSlot>
      <AppSlot $w={42}><svg width="25" height="23"><path d="M6 0h19v16H6z" fill="#f4f4f4" /><path d="M0 6h18v16H0z" fill="#777" opacity=".8" /><path d="M6 6h12v10H6z" fill="#c0c0c0" /></svg></AppSlot>
      <AppSlot>
        <svg width="24" height="24"><path d="M12 1a11 11 0 1 1-6 20l-5 1 2-5A11 11 0 0 1 12 1z" fill="#6264c7" /><rect x="5" y="7" width="10" height="9" rx="1.500" fill="#fff" /><path d="M16 10l4-3v9l-4-3z" fill="#fff" /></svg>
        <Badge $x={24} $y={7}>1</Badge>
      </AppSlot>
      <AppSlot $state="run">
        <svg width="24" height="24"><path d="M12 .5A11.500 11.500 0 1 1 6 22L.5 23.500 2 18A11.500 11.500 0 0 1 12 .5z" fill="#fff" /><circle cx="12" cy="12" r="9.500" fill="#34c759" /><FaWhatsapp size={19} x={2.500} y={2.500} color="#fff" /></svg>
        <Badge $x={24} $y={7}>9</Badge>
      </AppSlot>
      <AppSlot $state="run"><svg width="24" height="22"><path d="M0 2q0-2 2-2h6l3 3h11q2 0 2 2v5H0z" fill="#d99a12" /><path d="M0 6h9l3-2h12v16q0 1-1 1H1q-1 0-1-1z" fill="#ffce47" /><path d="M4 21v-5q0-2 2-2h11q2 0 2 2v5z" fill="#1b7fd4" /><path d="M8 17h8v1.500H8z" fill="#0d4f8c" /></svg></AppSlot>
      <AppSlot><svg width="24" height="24"><circle cx="12" cy="12" r="12" fill="#b9c0c8" /><circle cx="12" cy="12" r="10" fill="#7c868f" /><path d="M5 5l4 1h6l4-1v11q-1 6-7 6t-7-6z" fill="#d8402c" /><circle cx="8.500" cy="10" r="3.700" fill="#fff" /><circle cx="15.500" cy="10" r="3.700" fill="#fff" /><circle cx="9" cy="10" r="1.500" /><circle cx="15" cy="10" r="1.500" /><path d="M10.500 12h3L12 15z" fill="#f5a623" /><path d="M8 17h8l-2 4h-4z" fill="#f7d9b0" /></svg></AppSlot>
      <AppSlot $state="run"><SiSpotify size={24} color="#1ed760" /></AppSlot>
      <AppSlot $state="run"><svg width="24" height="24"><circle cx="12" cy="12" r="12" fill="#fbc116" /><path d="M12 12L1.600 6A12 12 0 0 1 22.400 6z" fill="#e33b2e" /><path d="M12 12l5.200 3L12 24A12 12 0 0 1 1.600 6z" fill="#2da94f" /><path d="M12 6.500h10.600L22 5H12z" fill="#e33b2e" /><circle cx="12" cy="12" r="5.800" fill="#fff" /><circle cx="12" cy="12" r="4.600" fill="#3b7ded" /><circle cx="20" cy="3.500" r="6" fill="#02020a" /></svg></AppSlot>
      <AppSlot $state="focus"><FocusBox><WordIcon s={22} /></FocusBox></AppSlot>
      <AppSlot $state="run"><svg width="24" height="24"><defs><linearGradient id="fox" x1="1" x2=".2" y2="1"><stop stopColor="#fff04a" /><stop offset=".5" stopColor="#ff8a1e" /><stop offset="1" stopColor="#f5206e" /></linearGradient></defs><path d="M3 5l2-3 2 4q2-1 4-1 0-3 4-5 0 3 3 5l2-1q3 3 3 8a11 11 0 0 1-22 1q0-5 2-8z" fill="url(#fox)" /><circle cx="12" cy="13" r="5.500" fill="#7a45d8" /><path d="M5 9q3-3 7-1l-1 2q-4 0-3 3 1 3 4 2-3 4-7 0-2-3 0-6z" fill="#ff7a1a" /></svg></AppSlot>
      <Tray>
        <ChevronUp size={16} />
        <svg width="1" height="1" />
        <svg width="17" height="14" fill="none" stroke="#fff" strokeWidth="1.400"><path d="M1 5q7.500-7 15 0M3.500 7.500q5-4.500 10 0M6 10q2.500-2.200 5 0" /><circle cx="8.500" cy="12" r="1" fill="#fff" /></svg>
        <svg width="16" height="14" fill="none" stroke="#fff" strokeWidth="1.200"><path d="M1 5h3l4-4v12L4 9H1zM10 5q1.500 2 0 4M12 3q3 4 0 8" /><path d="M14 1.500q4 5.500 0 11" stroke="#666" /></svg>
        <svg width="17" height="11"><rect x=".7" y=".7" width="13" height="9" rx="2" fill="none" stroke="#fff" strokeWidth="1.300" /><path d="M2.500 2.500H8v5.500H2.500zM15 3.500h1.500v4H15z" fill="#fff" /></svg>
        <svg width="11" height="1" />
        <Stack $end><Fit w={29}>21:03</Fit><Fit w={62}>04/12/2023</Fit></Stack>
        <svg width="1" height="1" />
        <svg width="14" height="16"><path d="M1 13V11l1-1V6q0-5 5-5t5 5v4l1 1v2zM5 14h4q-2 2.500-4 0z" fill="#f9a488" /></svg>
      </Tray>
    </Taskbar>
  );
}

export default function App() {
  return (
    <Desktop>
      <Global />
      <Windows>
        <BrowserWindow />
        <WordWindow />
        <Behind />
      </Windows>
      <SystemTaskbar />
    </Desktop>
  );
}
